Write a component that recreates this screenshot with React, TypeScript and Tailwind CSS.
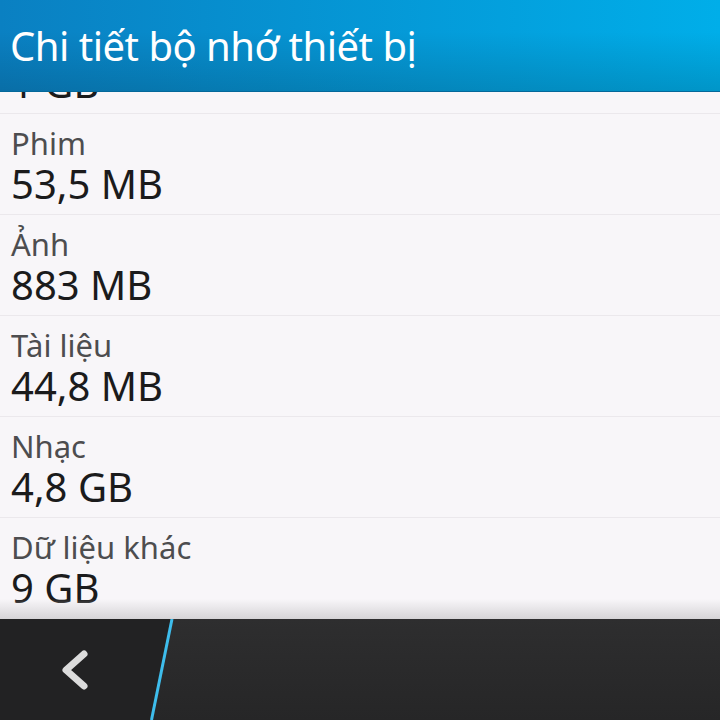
const items = [
  { label: 'Bộ nhớ', value: '1 GB' },
  { label: 'Phim', value: '53,5 MB' },
  { label: 'Ảnh', value: '883 MB' },
  { label: 'Tài liệu', value: '44,8 MB' },
  { label: 'Nhạc', value: '4,8 GB' },
  { label: 'Dữ liệu khác', value: '9 GB' },
  { label: 'Ứng dụng', value: '2 GB' },
]

export default function App() {
  return (
    <div className="w-[720px] h-[720px] flex flex-col overflow-hidden bg-[#f8f6f9] font-['Noto_Sans',sans-serif]">
      <header className="h-[92px] shrink-0 flex items-center px-[10px] border-b border-[#04689a] bg-[linear-gradient(to_bottom,rgba(0,0,0,0)_35%,rgba(0,0,0,0.14)),linear-gradient(to_right,#0a80c2,#00aee9)] z-10">
        <h1 className="text-[40px] leading-none text-white tracking-[-0.5px]">Chi tiết bộ nhớ thiết bị</h1>
      </header>

      <div className="flex-1 overflow-hidden relative">
        <div className="-mt-[79px]">
          {items.map((item) => (
            <div key={item.label} className="h-[101px] border-b border-[#ebe8ec] px-[11px] pt-[11px]">
              <p className="text-[31px] leading-[37px] text-[#4d4d4f]">{item.label}</p>
              <p className="text-[40px] leading-[44px] text-[#1b1b1c]">{item.value}</p>
            </div>
          ))}
        </div>
        <div className="absolute left-0 right-0 bottom-0 h-[20px] bg-linear-to-b from-[#f8f6f9]/0 to-[#d6d4d7]" />
      </div>

      <div className="h-[101px] shrink-0 flex bg-linear-to-b from-[#2e2e2f] to-[#262627]">
        <button className="w-[150px] h-full bg-[#222223] flex items-center justify-center">
          <svg width="32" height="44" viewBox="0 0 32 44" fill="none">
            <polyline
              points="25,6 7,22 25,38"
              stroke="#dcdcdc"
              strokeWidth="7"
              strokeLinecap="round"
              strokeLinejoin="round"
            />
          </svg>
        </button>
        <svg width="24" height="101" viewBox="0 0 24 101" className="shrink-0">
          <polygon points="0,0 22,0 1,101 0,101" fill="#222223" />
          <line x1="22" y1="0" x2="1.5" y2="101" stroke="#3ebdec" strokeWidth="3" />
        </svg>
        <div className="flex-1" />
      </div>
    </div>
  )
}
